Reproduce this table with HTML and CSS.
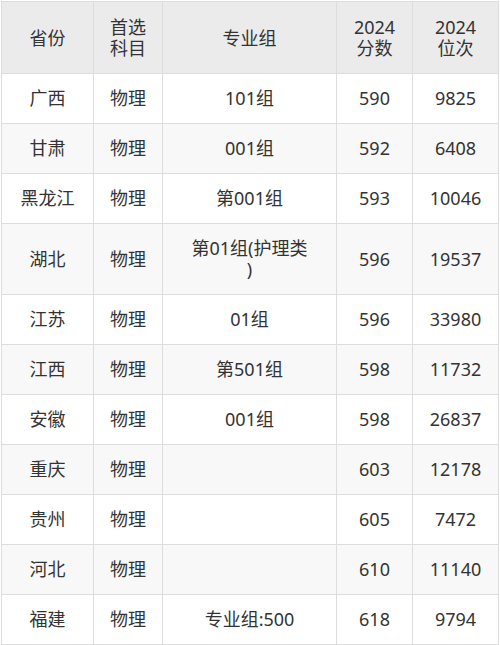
FILE: index.html
```html
<!DOCTYPE html>
<html lang="zh">
<head>
<meta charset="utf-8">
<link rel="stylesheet" href="styles.css">
</head>
<body>
<table class="score-table">
  <colgroup>
    <col class="c1"><col class="c2"><col class="c3"><col class="c4"><col class="c5">
  </colgroup>
  <thead>
    <tr><th>省份</th><th>首选<br>科目</th><th>专业组</th><th>2024<br>分数</th><th>2024<br>位次</th></tr>
  </thead>
  <tbody>
    <tr><td>广西</td><td>物理</td><td>101组</td><td>590</td><td>9825</td></tr>
    <tr><td>甘肃</td><td>物理</td><td>001组</td><td>592</td><td>6408</td></tr>
    <tr><td>黑龙江</td><td>物理</td><td>第001组</td><td>593</td><td>10046</td></tr>
    <tr><td>湖北</td><td>物理</td><td>第01组(护理类<br>)</td><td>596</td><td>19537</td></tr>
    <tr><td>江苏</td><td>物理</td><td>01组</td><td>596</td><td>33980</td></tr>
    <tr><td>江西</td><td>物理</td><td>第501组</td><td>598</td><td>11732</td></tr>
    <tr><td>安徽</td><td>物理</td><td>001组</td><td>598</td><td>26837</td></tr>
    <tr><td>重庆</td><td>物理</td><td></td><td>603</td><td>12178</td></tr>
    <tr><td>贵州</td><td>物理</td><td></td><td>605</td><td>7472</td></tr>
    <tr><td>河北</td><td>物理</td><td></td><td>610</td><td>11140</td></tr>
    <tr><td>福建</td><td>物理</td><td>专业组:500</td><td>618</td><td>9794</td></tr>
  </tbody>
</table>
</body>
</html>
```
FILE: styles.css
```css
html, body {
  margin: 0;
  padding: 0;
  background: #ffffff;
}
body {
  padding: 1px 0 0 1px;
  font-family: "Noto Sans", "Noto Sans CJK SC", sans-serif;
  color: #333333;
}
.score-table {
  border-collapse: collapse;
  table-layout: fixed;
  width: 497px;
  font-size: 18px;
  line-height: 21px;
}
.c1 { width: 92px; }
.c2 { width: 69px; }
.c3 { width: 174px; }
.c4 { width: 76px; }
.c5 { width: 86px; }
.score-table th,
.score-table td {
  border: 1px solid #dddddd;
  text-align: center;
  vertical-align: middle;
  padding: 14px 4px;
  font-weight: normal;
}
.score-table th {
  background: #ebebeb;
  padding: 15px 4px 14px;
}
.score-table tbody tr:nth-child(even) td {
  background: #f8f8f8;
}
```
